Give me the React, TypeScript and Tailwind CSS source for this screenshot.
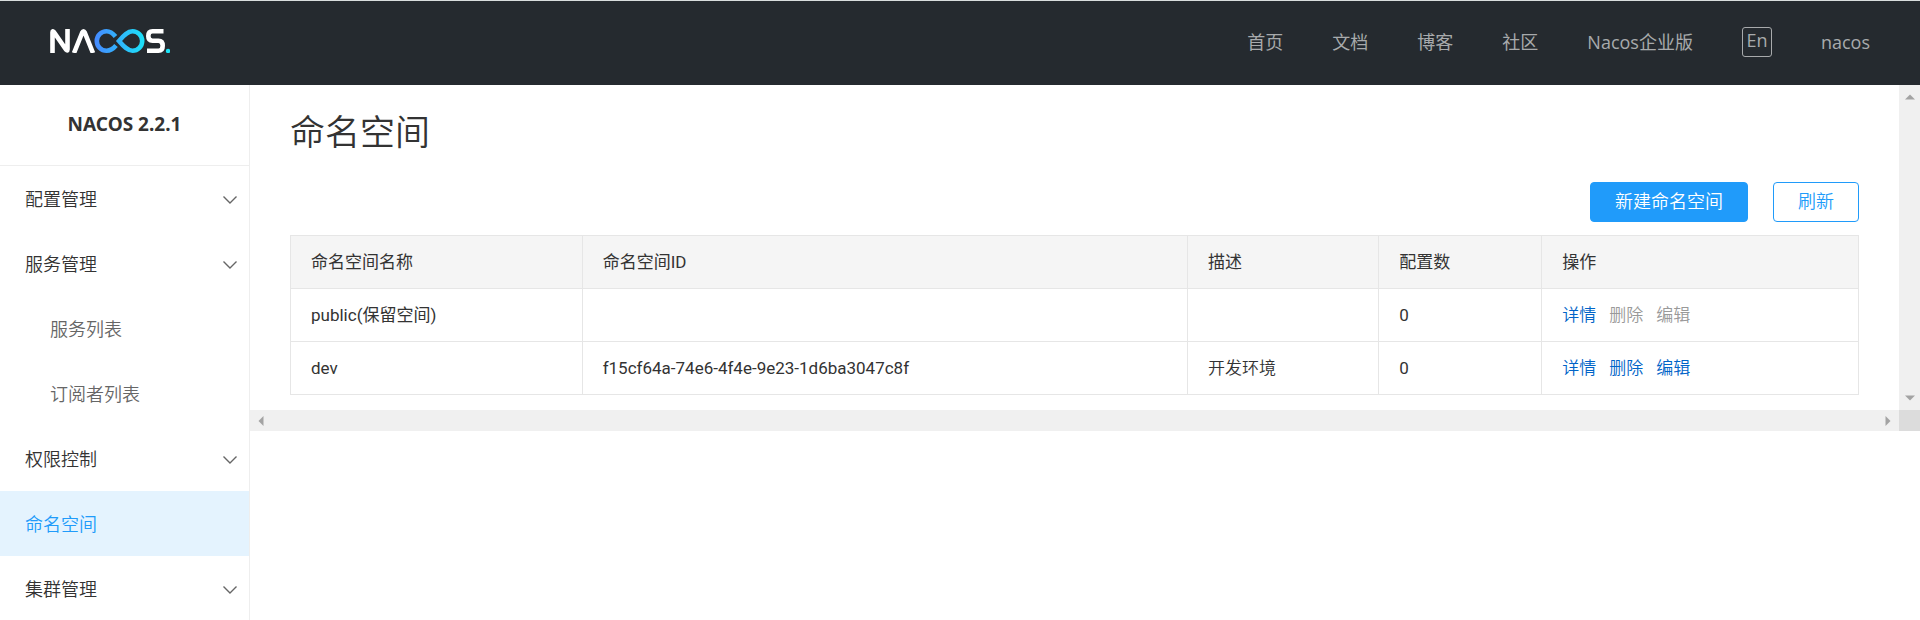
import React from "react";

const NAV = ["首页", "文档", "博客", "社区", "Nacos企业版"];

type MenuEntry = { label: string; kind: "group" | "child" | "leaf" };

const MENU: MenuEntry[] = [
  { label: "配置管理", kind: "group" },
  { label: "服务管理", kind: "group" },
  { label: "服务列表", kind: "child" },
  { label: "订阅者列表", kind: "child" },
  { label: "权限控制", kind: "group" },
  { label: "命名空间", kind: "leaf" },
  { label: "集群管理", kind: "group" },
];

type Row = { name: string; id: string; desc: string; count: number; locked: boolean };

const ROWS: Row[] = [
  { name: "public(保留空间)", id: "", desc: "", count: 0, locked: true },
  { name: "dev", id: "f15cf64a-74e6-4f4e-9e23-1d6ba3047c8f", desc: "开发环境", count: 0, locked: false },
];

function Logo() {
  return (
    <svg width="120" height="24" viewBox="0 0 120 24" fill="none" aria-label="NACOS" role="img">
      <defs>
        <linearGradient id="loop" x1="44" y1="0" x2="95" y2="0" gradientUnits="userSpaceOnUse">
          <stop offset="0" stopColor="#4688ff" />
          <stop offset="1" stopColor="#1be3f8" />
        </linearGradient>
      </defs>
      <path d="M2.5 24V3.2Q2.5 1.5 3.8 3L16.2 20.8Q17.5 22.3 17.5 20.6V0" stroke="#fff" strokeWidth="4.6" />
      <path d="M24 24L32.2 3.6Q33.5 1 34.8 3.6L43 24" stroke="#fff" strokeWidth="4.6" />
      <path d="M66 16.5C63.5 19.5 60.5 21.7 56.5 21.7A9.7 9.7 0 0 1 56.5 2.3C60.5 2.3 63 4.5 65.5 7.5" stroke="url(#loop)" strokeWidth="4.6" />
      <path d="M69 12C73 7.5 77 2.3 82.5 2.3A9.7 9.7 0 0 1 82.5 21.7C77 21.7 73 16.5 69 12Z" stroke="url(#loop)" strokeWidth="4.6" />
      <path d="M113.5 2.3H102.5Q98.3 2.3 98.3 7Q98.3 11.7 102.5 11.7H108.5Q112.7 11.7 112.7 16.7Q112.7 21.7 108.5 21.7H97" stroke="#fff" strokeWidth="4.6" />
      <circle cx="118" cy="22" r="2.2" fill="#1be3f8" />
    </svg>
  );
}

function Chevron() {
  return (
    <svg width="14" height="8" viewBox="0 0 14 8" fill="none" stroke="#666" strokeWidth="1.4" aria-hidden="true">
      <path d="M0.5 0.5L7 7L13.5 0.5" />
    </svg>
  );
}

function Arrow({ d }: { d: string }) {
  return (
    <svg width="10" height="10" viewBox="0 0 10 10" fill="#a3a3a3" aria-hidden="true">
      <path d={d} />
    </svg>
  );
}

function Header() {
  return (
    <header className="flex h-[85px] items-center justify-between border-t border-[#d9dddd] bg-[#252a2f] px-[50px] pb-0.5">
      <a href="#home" className="-mt-0.5">
        <Logo />
      </a>
      <nav className="flex items-center gap-[49px] font-['Open_Sans','Noto_Sans_CJK_SC',sans-serif] text-[18px] leading-6 font-normal text-[#a8aaac]">
        {NAV.map((label) => (
          <a key={label} href={"#" + label}>
            {label}
          </a>
        ))}
        <button type="button" className="flex h-[30px] w-[30px] justify-center rounded-[3px] border border-[#a8aaac]">
          En
        </button>
        <a href="#user">nacos</a>
      </nav>
    </header>
  );
}

function Sidebar() {
  return (
    <aside className="w-[250px] shrink-0 border-r border-[#eee]">
      <h2 className="flex h-[81px] items-center justify-center border-b border-[#eee] pb-0.5 font-['Noto_Sans',sans-serif] text-[19px] font-bold whitespace-nowrap">
        NACOS 2.2.1
      </h2>
      <ul>
        {MENU.map((item) => (
          <li key={item.label}>
            {item.kind === "group" && (
              <button type="button" className="flex h-[65px] w-full items-center justify-between pt-0.5 pr-3 pl-[25px]">
                {item.label}
                <Chevron />
              </button>
            )}
            {item.kind === "child" && (
              <a href={"#" + item.label} className="flex h-[65px] items-center pt-0.5 pl-[50px] text-[#666]">
                {item.label}
              </a>
            )}
            {item.kind === "leaf" && (
              <a href={"#" + item.label} className="flex h-[65px] items-center bg-[#e4f3fe] pt-0.5 pl-[25px] text-[#209bfa]">
                {item.label}
              </a>
            )}
          </li>
        ))}
      </ul>
    </aside>
  );
}

function NamespaceTable() {
  const cell = "h-[53px] border border-[#e6e6e6] px-5 text-left";
  return (
    <table className="w-full table-fixed border-collapse text-[17px]">
      <colgroup>
        <col className="w-[18.6%]" />
        <col className="w-[38.6%]" />
        <col className="w-[12.2%]" />
        <col className="w-[10.4%]" />
        <col className="w-[20.2%]" />
      </colgroup>
      <thead className="bg-[#f5f5f5]">
        <tr>
          {["命名空间名称", "命名空间ID", "描述", "配置数", "操作"].map((title) => (
            <th key={title} scope="col" className={cell + " font-normal"}>
              {title}
            </th>
          ))}
        </tr>
      </thead>
      <tbody>
        {ROWS.map((row) => (
          <tr key={row.name}>
            <td className={cell + " font-normal"}>{row.name}</td>
            <td className={cell + " font-normal"}>{row.id}</td>
            <td className={cell}>{row.desc}</td>
            <td className={cell + " font-normal"}>{row.count}</td>
            <td className={cell}>
              <div className="flex gap-[13px] text-[#0064c8]">
                <button type="button">详情</button>
                <button type="button" disabled={row.locked} className="disabled:text-[#999]">
                  删除
                </button>
                <button type="button" disabled={row.locked} className="disabled:text-[#999]">
                  编辑
                </button>
              </div>
            </td>
          </tr>
        ))}
      </tbody>
    </table>
  );
}

export default function App() {
  return (
    <div className="h-screen overflow-hidden bg-white font-['Roboto','Noto_Sans_CJK_SC',sans-serif] text-[18px] leading-6 font-[350] text-[#333]">
      <Header />
      <div className="flex">
        <Sidebar />
        <div className="grid min-w-0 flex-1 grid-cols-[1fr_21px] content-start">
          <main className="min-w-0 px-10 pt-[23px] pb-[15px]">
            <h1 className="text-[35px] leading-[52px]">命名空间</h1>
            <div className="mt-[22px] mb-[13px] flex justify-end gap-[25px]">
              <button type="button" className="h-10 rounded border border-[#209bfa] bg-[#209bfa] px-6 text-white">
                新建命名空间
              </button>
              <button type="button" className="h-10 rounded border border-[#209bfa] px-6 text-[#209bfa]">
                刷新
              </button>
            </div>
            <NamespaceTable />
          </main>
          <div className="flex flex-col items-center justify-between bg-[#f0f0f0] py-[7px]">
            <Arrow d="M0 7.5L5 2.5L10 7.5Z" />
            <Arrow d="M0 2.5L5 7.5L10 2.5Z" />
          </div>
          <div className="flex h-[21px] items-center justify-between bg-[#f0f0f0] px-[6px]">
            <Arrow d="M7.5 0L2.5 5L7.5 10Z" />
            <Arrow d="M2.5 0L7.5 5L2.5 10Z" />
          </div>
          <div className="bg-[#dcdcdc]" />
        </div>
      </div>
    </div>
  );
}
